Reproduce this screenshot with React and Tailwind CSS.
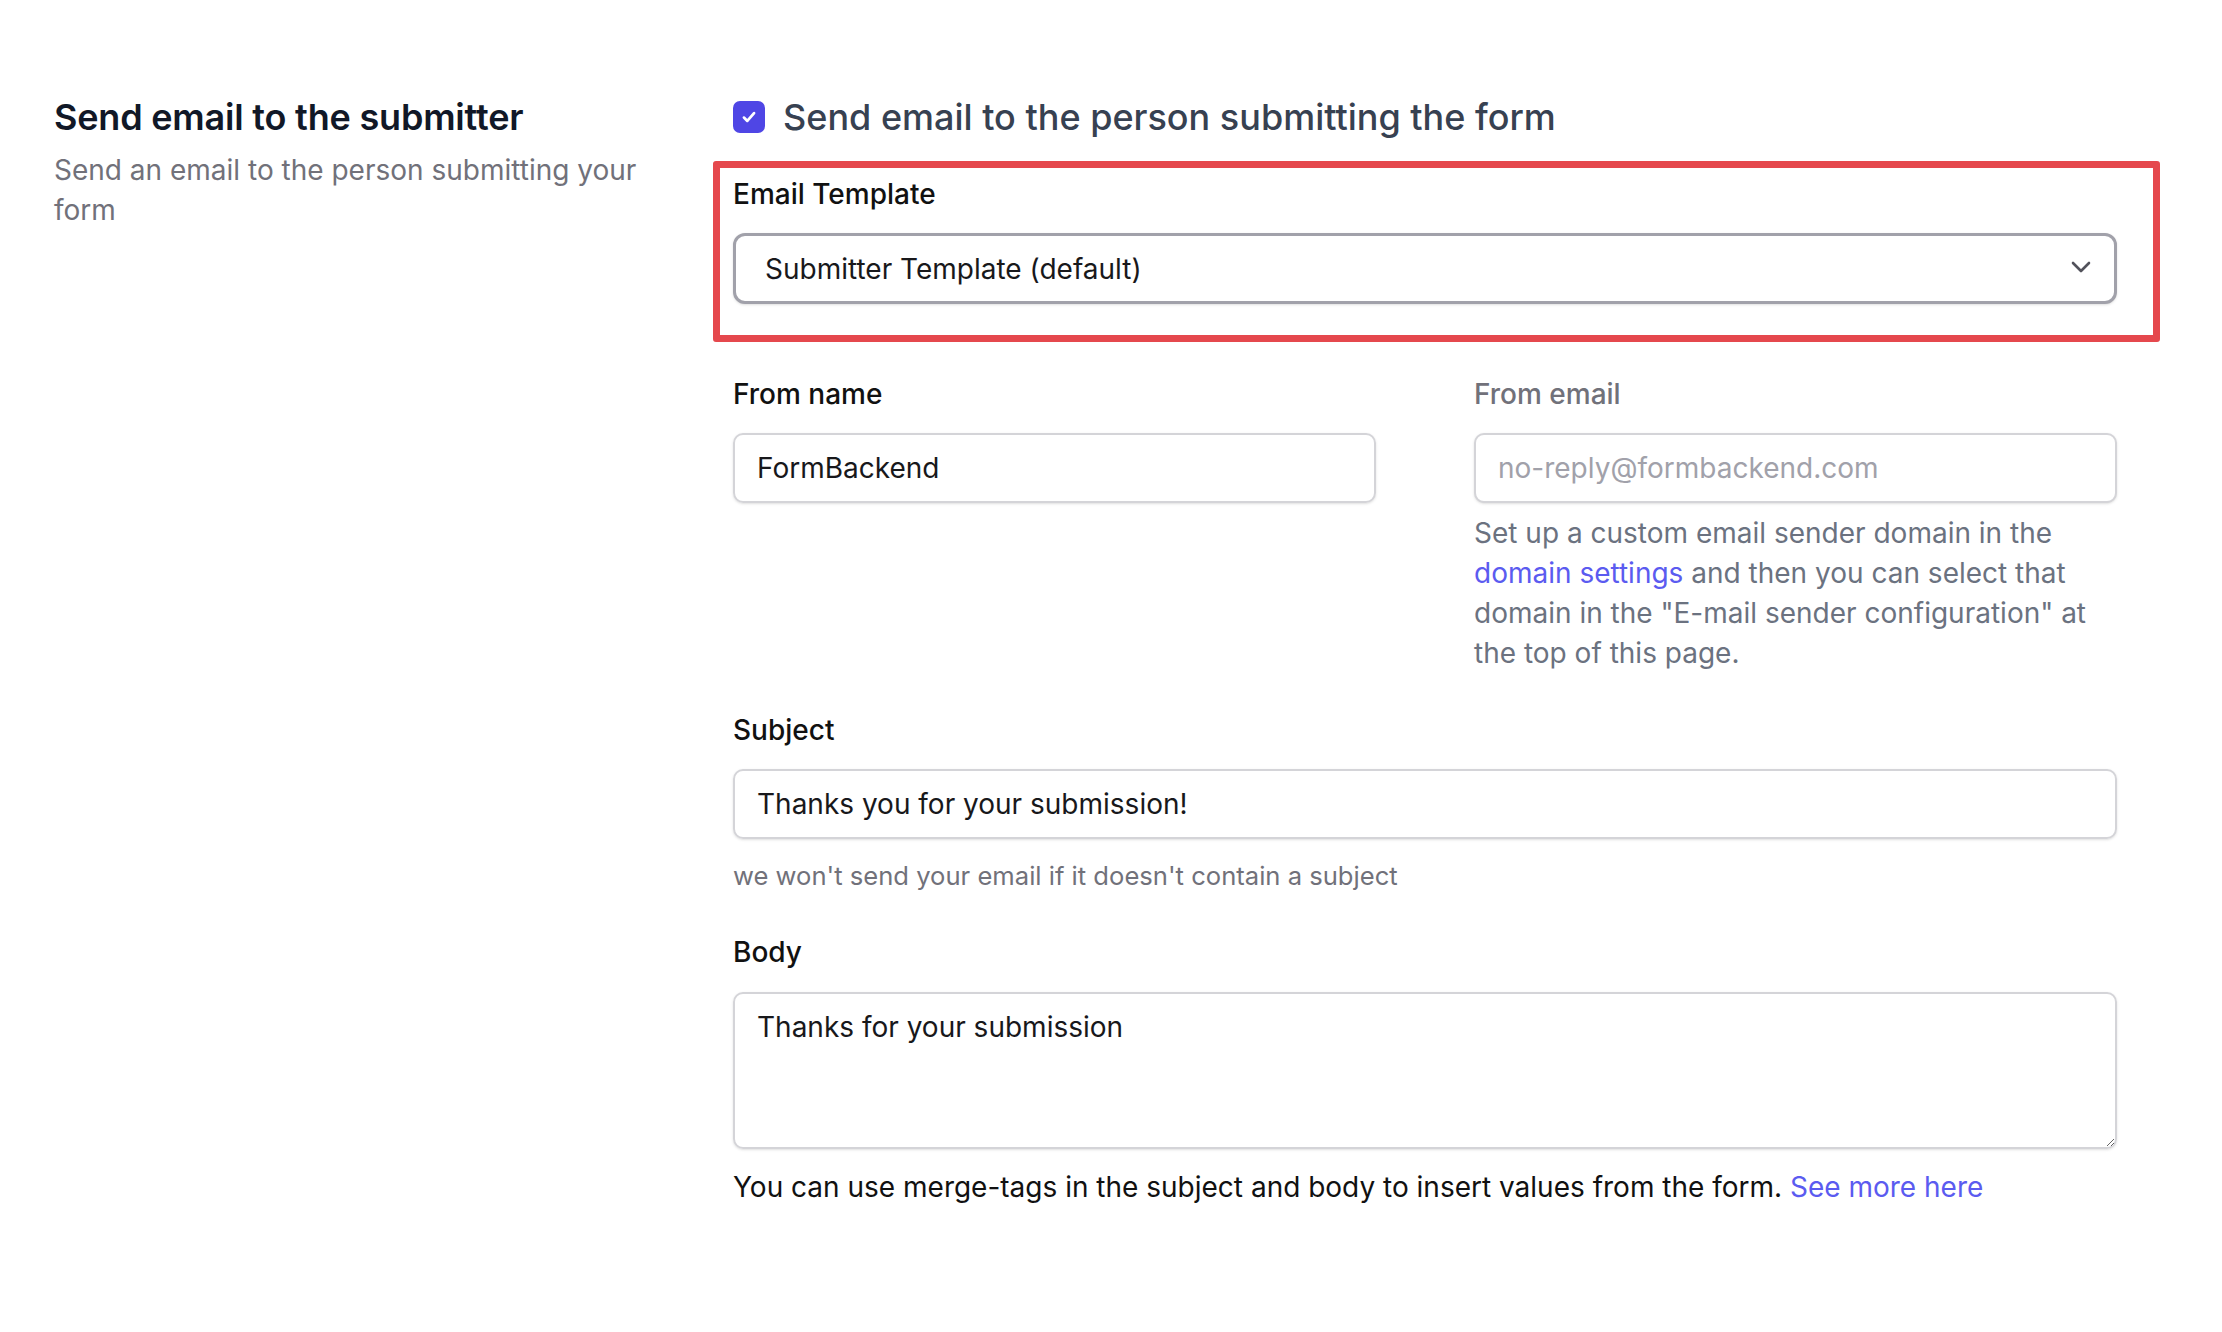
import React, { useState } from 'react';

function Label({ children, muted }) {
  return (
    <label className={`block text-[28px] leading-[36px] font-medium ${muted ? 'text-[#71717a]' : 'text-[#111111]'}`}>
      {children}
    </label>
  );
}

function App() {
  const [fromName, setFromName] = useState('FormBackend');
  const [subject, setSubject] = useState('Thanks you for your submission!');
  const [body, setBody] = useState('Thanks for your submission');

  return (
    <div className="min-h-screen bg-white font-['Inter',sans-serif] pt-[97px]">
      <div className="flex">
        {/* Left description column */}
        <div className="w-[733px] shrink-0 pl-[54px] pr-[70px]">
          <h2 className="text-[36px] leading-[40px] font-semibold text-[#111827] tracking-[-0.2px]">
            Send email to the submitter
          </h2>
          <p className="mt-[13px] text-[28px] leading-[40px] text-[#71717a]">
            Send an email to the person submitting your form
          </p>
        </div>

        {/* Right form column */}
        <div className="w-[1384px] shrink-0">
          <div className="flex items-center h-[40px] gap-[18px]">
            <span className="w-[32px] h-[32px] rounded-[7px] bg-[#4f46e5] flex items-center justify-center">
              <svg width="18" height="18" viewBox="0 0 16 16" fill="none">
                <path d="M3.5 8.5l3 3 6-7" stroke="white" strokeWidth="2.4" strokeLinecap="round" strokeLinejoin="round" />
              </svg>
            </span>
            <span className="text-[36px] leading-[40px] font-medium text-[#374151]">
              Send email to the person submitting the form
            </span>
          </div>

          {/* highlighted template picker */}
          <div className="mt-[24px] ml-[-20px] mr-[-43px] border-[7px] border-[#e5484d] rounded-[3px] pl-[13px] pr-[36px] pt-[8px] pb-[31px]">
            <Label>Email Template</Label>
            <div className="relative mt-[21px]">
              <select className="appearance-none w-full h-[71px] rounded-[12px] border-[3px] border-[#a1a1aa] bg-white pl-[29px] text-[28px] text-[#18181b] outline-none shadow-sm">
                <option>Submitter Template (default)</option>
              </select>
              <svg className="absolute right-[26px] top-[28px] pointer-events-none" width="20" height="12" viewBox="0 0 20 12" fill="none">
                <path d="M2 2l8 8 8-8" stroke="#52525b" strokeWidth="2.6" strokeLinecap="round" strokeLinejoin="round" />
              </svg>
            </div>
          </div>

          <div className="mt-[34px] grid grid-cols-2 gap-x-[98px]">
            <div>
              <Label>From name</Label>
              <input
                value={fromName}
                onChange={(e) => setFromName(e.target.value)}
                className="mt-[21px] w-full h-[70px] rounded-[10px] border-2 border-[#d4d4d8] px-[22px] text-[28px] text-[#18181b] outline-none shadow-sm"
              />
            </div>
            <div>
              <Label muted>From email</Label>
              <input
                disabled
                placeholder="no-reply@formbackend.com"
                className="mt-[21px] w-full h-[70px] rounded-[10px] border-2 border-[#d4d4d8] bg-white px-[22px] text-[28px] placeholder:text-[#a1a1aa] outline-none shadow-sm"
              />
              <p className="mt-[10px] text-[28px] leading-[40px] text-[#6b7280]">
                Set up a custom email sender domain in the{' '}
                <a href="#" className="text-[#5b5bf0]">domain settings</a> and then you can select that
                domain in the "E-mail sender configuration" at the top of this page.
              </p>
            </div>
          </div>

          <div className="mt-[39px]">
            <Label>Subject</Label>
            <input
              value={subject}
              onChange={(e) => setSubject(e.target.value)}
              className="mt-[21px] w-full h-[70px] rounded-[10px] border-2 border-[#d4d4d8] px-[22px] text-[28px] text-[#18181b] outline-none shadow-sm"
            />
            <p className="mt-[19px] text-[25.6px] leading-[36px] text-[#71717a]">
              we won't send your email if it doesn't contain a subject
            </p>
          </div>

          <div className="mt-[40px]">
            <Label>Body</Label>
            <textarea
              value={body}
              onChange={(e) => setBody(e.target.value)}
              className="block mt-[22px] w-full h-[157px] rounded-[10px] border-2 border-[#d4d4d8] px-[22px] pt-[13px] pb-[12px] text-[28px] leading-[40px] text-[#18181b] outline-none shadow-sm"
            />
            <p className="mt-[18px] text-[28px] leading-[40px] text-[#111111]">
              You can use merge-tags in the subject and body to insert values from the form.{' '}
              <a href="#" className="text-[#5b5bf0]">See more here</a>
            </p>
          </div>
        </div>
      </div>
    </div>
  );
}

export default App;
